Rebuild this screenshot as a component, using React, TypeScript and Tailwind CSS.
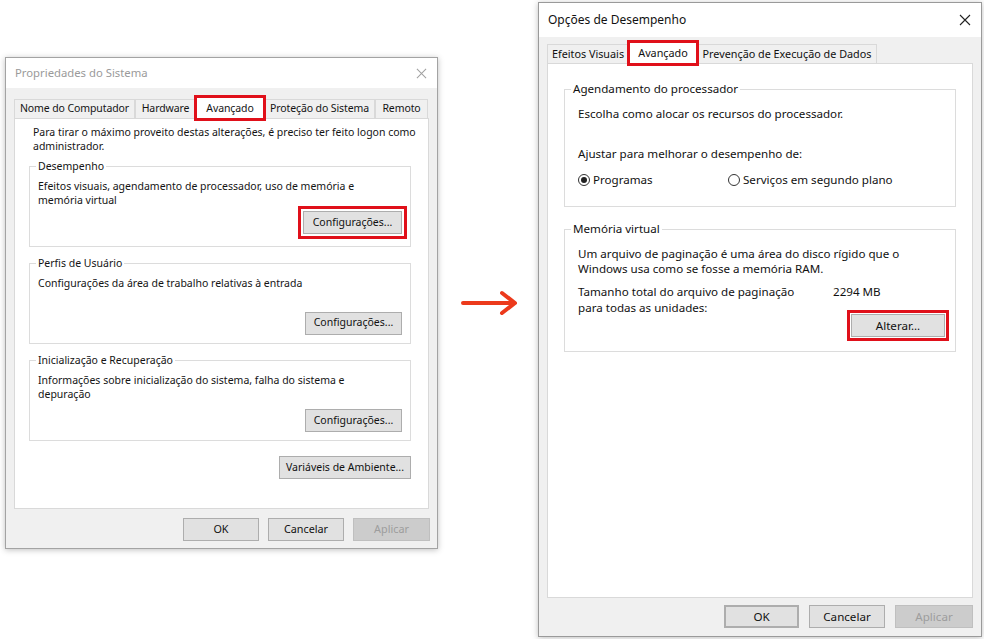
import clsx from "clsx";
import type {ReactNode} from "react";

const Btn = ({children, className, disabled, focus}: { children: ReactNode, className?: string, disabled?: boolean, focus?: boolean }) => (
    <div
        className={clsx(
            "flex items-center justify-center border",
            disabled ? "border-[#bfbfbf] bg-[#cccccc] text-[#9d9d9d]" : "border-[#adadad] bg-[#e1e1e1] text-[#111]",
            focus && "border-2 border-[#0a74c9]",
            className
        )}
    >
        {children}
    </div>
);

const CloseX = ({size, color}: { size: number, color: string }) => (
    <svg width={size} height={size} viewBox="0 0 12 12">
        <path d="M1 1 L11 11 M11 1 L1 11" stroke={color} strokeWidth="1.1" fill="none"/>
    </svg>
);

const Tab = ({label, w, active}: { label: string, w: string, active?: boolean }) => (
    <div
        className={clsx(
            "flex items-center justify-center border border-b-0 border-[#d9d9d9] whitespace-nowrap",
            active ? "relative z-10 -mb-px h-[22px] bg-white outline-solid outline-3 outline-[#e0101a] -outline-offset-1" : "h-[19px] bg-[#f0f0f0]",
            w
        )}
    >
        {label}
    </div>
);

const Radio = ({checked, label}: { checked?: boolean, label: string }) => (
    <div className="flex items-center gap-[3px]">
        <div className="flex size-[12px] items-center justify-center rounded-full border border-[#333]">
            {checked && <div className="size-[6px] rounded-full bg-[#222]"/>}
        </div>
        <span>{label}</span>
    </div>
);

const LeftDialog = () => (
    <div className="ml-[5px] mt-[57px] flex h-[492px] w-[433px] shrink-0 flex-col border border-[#a3a3a3] bg-[#f0f0f0] text-[10.5px] text-[#141414] shadow-[0_1px_6px_rgba(0,0,0,0.25)]">
        <div className="flex h-[30px] items-center justify-between bg-white pl-[9px] pr-[10px]">
            <span className="text-[11.3px] text-[#9a9a9a]">Propriedades do Sistema</span>
            <CloseX size={11} color="#a0a0a0"/>
        </div>
        <div className="mt-[9px] flex items-end pl-[8px] tracking-[-0.1px]">
            <Tab label="Nome do Computador" w="w-[121px]"/>
            <Tab label="Hardware" w="w-[61px]"/>
            <Tab label="Avançado" w="w-[68px]" active/>
            <Tab label="Proteção do Sistema" w="w-[111px]"/>
            <Tab label="Remoto" w="w-[53px]"/>
        </div>
        <div className="mx-[8px] flex h-[391px] flex-col border border-[#d9d9d9] bg-white pl-[14px] pr-[17px]">
            <p className="-mr-[14px] mt-[6px] pl-[4px] leading-[14px]">
                Para tirar o máximo proveito destas alterações, é preciso ter feito logon como administrador.
            </p>
            <fieldset className="mt-[6px] h-[88px] border border-[#dcdcdc] px-[8px]">
                <legend className="-ml-[2px] px-[2px] leading-[14px]">Desempenho</legend>
                <p className="mt-[7px] pr-[30px] leading-[13.5px]">Efeitos visuais, agendamento de processador, uso de memória e memória virtual</p>
                <div className="mt-[4px] flex justify-end">
                    <Btn className="h-[23px] w-[99px] outline-solid outline-3 outline-[#e0101a] outline-offset-[2px]">Configurações...</Btn>
                </div>
            </fieldset>
            <fieldset className="mt-[9px] h-[88px] border border-[#dcdcdc] px-[8px]">
                <legend className="-ml-[2px] px-[2px] leading-[14px]">Perfis de Usuário</legend>
                <p className="mt-[7px] leading-[13.5px]">Configurações da área de trabalho relativas à entrada</p>
                <div className="mt-[21px] flex justify-end">
                    <Btn className="h-[23px] w-[97px]">Configurações...</Btn>
                </div>
            </fieldset>
            <fieldset className="mt-[9px] h-[88px] border border-[#dcdcdc] px-[8px]">
                <legend className="-ml-[2px] px-[2px] leading-[14px]">Inicialização e Recuperação</legend>
                <p className="mt-[7px] pr-[40px] leading-[13.5px]">Informações sobre inicialização do sistema, falha do sistema e depuração</p>
                <div className="mt-[8px] flex justify-end">
                    <Btn className="h-[23px] w-[97px]">Configurações...</Btn>
                </div>
            </fieldset>
            <Btn className="mt-[15px] h-[23px] w-[132px] self-end">Variáveis de Ambiente...</Btn>
        </div>
        <div className="mt-[9px] flex justify-end gap-[9px] pr-[7px] text-[10.8px]">
            <Btn className="h-[23px] w-[76px]">OK</Btn>
            <Btn className="h-[23px] w-[76px]">Cancelar</Btn>
            <Btn className="h-[23px] w-[77px]" disabled>Aplicar</Btn>
        </div>
    </div>
);

const RightDialog = () => (
    <div className="mt-[2px] flex h-[635px] w-[444px] shrink-0 flex-col border border-[#9a9a9a] bg-[#f0f0f0] text-[11.6px] text-[#111] shadow-[0_1px_6px_rgba(0,0,0,0.25)]">
        <div className="flex h-[34px] items-center justify-between bg-white pl-[9px] pr-[10px]">
            <span className="text-[12px] text-[#111]">Opções de Desempenho</span>
            <CloseX size={12} color="#222"/>
        </div>
        <div className="mt-[5px] flex items-end pl-[8px] text-[10.8px]">
            <Tab label="Efeitos Visuais" w="w-[82px]"/>
            <Tab label="Avançado" w="w-[68px]" active/>
            <Tab label="Prevenção de Execução de Dados" w="w-[180px]"/>
        </div>
        <div className="mx-[8px] flex h-[535px] flex-col border border-[#d9d9d9] bg-white px-[16px] pt-[17px]">
            <fieldset className="h-[126px] border border-[#dcdcdc] pl-[13px]">
                <legend className="-ml-[7px] px-[2px] leading-[16px]">Agendamento do processador</legend>
                <p className="mt-[9px] leading-[16px]">Escolha como alocar os recursos do processador.</p>
                <p className="mt-[24px] leading-[16px]">Ajustar para melhorar o desempenho de:</p>
                <div className="mt-[10px] flex leading-[16px]">
                    <div className="w-[150px]"><Radio checked label="Programas"/></div>
                    <Radio label="Serviços em segundo plano"/>
                </div>
            </fieldset>
            <fieldset className="mt-[14px] h-[131px] border border-[#dcdcdc] pl-[13px] pr-[10px]">
                <legend className="-ml-[7px] px-[2px] leading-[16px]">Memória virtual</legend>
                <p className="mt-[9px] pr-[30px] leading-[15px]">Um arquivo de paginação é uma área do disco rígido que o Windows usa como se fosse a memória RAM.</p>
                <div className="mt-[8px] flex">
                    <p className="w-[255px] pr-[20px] leading-[16px]">Tamanho total do arquivo de paginação para todas as unidades:</p>
                    <div className="flex flex-1 flex-col">
                        <span className="leading-[16px]">2294 MB</span>
                        <Btn className="mt-[14px] h-[23px] w-[94px] self-end outline-solid outline-3 outline-[#e0101a] outline-offset-[1px]">Alterar...</Btn>
                    </div>
                </div>
            </fieldset>
        </div>
        <div className="mt-[7px] flex justify-end gap-[10px] pr-[8px]">
            <Btn className="h-[23px] w-[75px]" focus>OK</Btn>
            <Btn className="h-[23px] w-[76px]">Cancelar</Btn>
            <Btn className="h-[23px] w-[78px]" disabled>Aplicar</Btn>
        </div>
    </div>
);

const Arrow = () => (
    <div className="flex w-[100px] shrink-0 justify-center pl-[4px] pt-[290px]">
        <svg width="60" height="26" viewBox="0 0 60 26">
            <path d="M3 13 H54 M42 3 L55 13 L42 23" stroke="#ec3a1c" strokeWidth="4" fill="none" strokeLinejoin="round" strokeLinecap="round"/>
        </svg>
    </div>
);

export default function App() {
    return (
        <div className="flex h-[639px] w-[984px] items-start overflow-hidden bg-white font-['Noto_Sans',sans-serif]">
            <LeftDialog/>
            <Arrow/>
            <RightDialog/>
        </div>
    );
}
